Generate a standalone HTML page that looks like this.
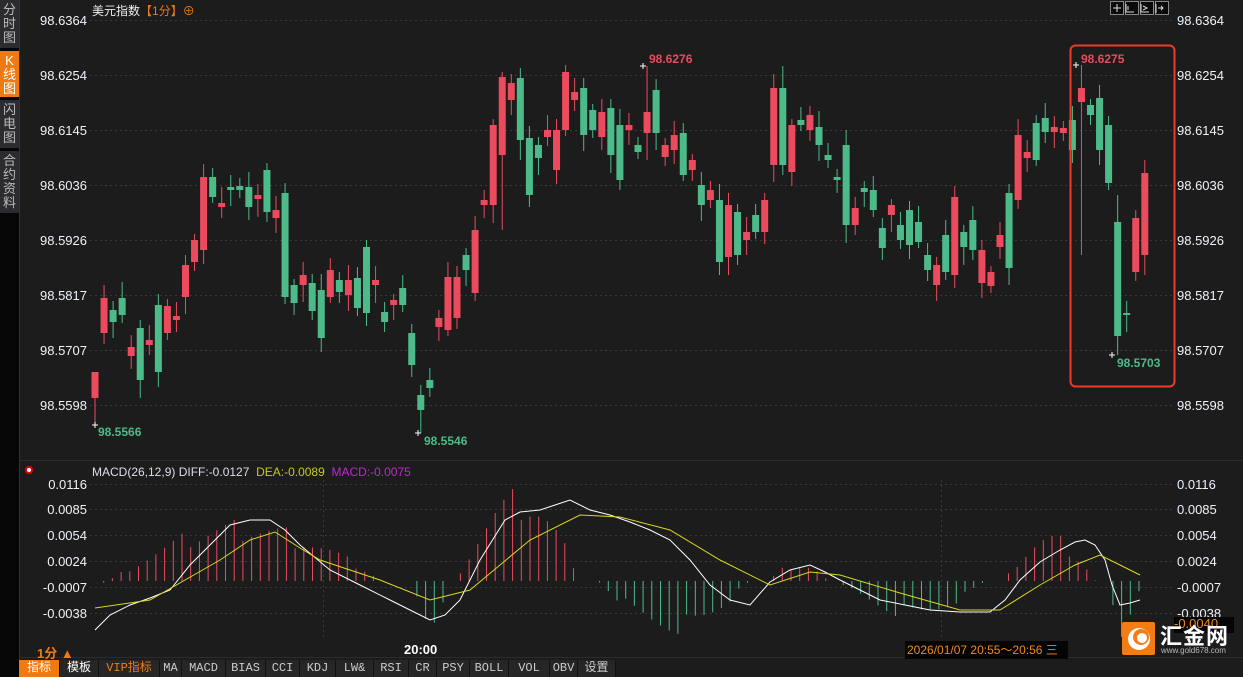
<!DOCTYPE html>
<html><head><meta charset="utf-8"><style>
*{margin:0;padding:0;box-sizing:border-box}
body{width:1243px;height:677px;background:#1c1c1c;overflow:hidden;position:relative;font-family:"Liberation Sans","Noto Sans CJK SC",sans-serif;color:#e8eef5}
.a{position:absolute;white-space:nowrap}
.tab{position:absolute;left:0;width:19px;background:#2c2c30;color:#bbb;font-size:13px;line-height:14px;text-align:center;padding-top:3px}
.bar{position:absolute;left:19px;top:660px;height:17px;display:flex;font-size:12px}
.bar div{background:#262626;border-right:1px solid #111;color:#ccc;text-align:center;line-height:17px;font-family:"Liberation Mono","Noto Sans CJK SC",monospace}
</style></head><body>
<svg class="a" style="left:0;top:0" width="1243" height="677" id="s"></svg>
<div class="tab" style="top:0;height:48px">分<br>时<br>图</div>
<div class="tab" style="top:51px;height:46px;background:#f07a12;color:#fff">K<br>线<br>图</div>
<div class="tab" style="top:100px;height:48px">闪<br>电<br>图</div>
<div class="tab" style="top:151px;height:62px">合<br>约<br>资<br>料</div>
<div class="a" style="left:92px;top:2px;font-size:12px;color:#eee">美元指数<span style="color:#f07a12">【1分】⊕</span></div>
<div class="a" style="left:92px;top:465px;font-size:12px;color:#dde">MACD(26,12,9) DIFF:-0.0127 &nbsp;<span style="color:#c8c81a">DEA:-0.0089</span> &nbsp;<span style="color:#c026d3">MACD:-0.0075</span></div>
<div class="a" style="left:37px;top:643px;font-size:13px;color:#f07a12;font-weight:bold">1分 ▲</div>
<div class="a" style="left:404px;top:642px;font-size:13px;color:#fff;font-weight:bold">20:00</div>
<div class="a" style="left:905px;top:641px;width:163px;height:18px;background:#050505;color:#f08a18;font-size:12px;line-height:18px;padding-left:2px">2026/01/07 20:55～20:56 三</div>
<div class="a" style="left:1174px;top:617px;width:60px;height:16px;background:#050505;color:#f08a18;font-size:13px;line-height:14px">-0.0040</div>
<div class="a" style="left:1122px;top:622px;width:33px;height:33px;background:#f47c15;border-radius:2px"></div>
<svg class="a" style="left:1122px;top:622px" width="33" height="33"><circle cx="17" cy="17" r="11" fill="#fff"/><circle cx="19" cy="15" r="8" fill="#f47c15"/><circle cx="20" cy="16" r="5" fill="#fff"/></svg>
<div class="a" style="left:1160px;top:619px;font-size:22px;color:#fff;font-weight:bold;letter-spacing:1px">汇金网</div>
<div class="a" style="left:1161px;top:646px;font-size:8px;color:#bbb">www.gold678.com</div>
<div class="bar">
<div style="width:41px;background:#f07a12;color:#fff">指标</div>
<div style="width:39px;color:#fff">模板</div>
<div style="width:61px;color:#f07a12">VIP指标</div>
<div style="width:22px">MA</div><div style="width:44px">MACD</div><div style="width:40px">BIAS</div><div style="width:34px">CCI</div><div style="width:36px">KDJ</div><div style="width:38px">LW&amp;</div><div style="width:35px">RSI</div><div style="width:28px">CR</div><div style="width:33px">PSY</div><div style="width:39px">BOLL</div><div style="width:41px">VOL</div><div style="width:28px">OBV</div><div style="width:38px">设置</div>
</div>
<script>
const s=document.getElementById('s');let h='';
const R='#ec4b5e',G='#4dbb89';
h+='<rect x="0" y="0" width="19" height="677" fill="#060606"/>';
h+='<line x1="19.5" y1="0" x2="19.5" y2="660" stroke="#333"/>';
h+='<line x1="19" y1="460.5" x2="1243" y2="460.5" stroke="#2c2c2c"/>';
h+='<line x1="19" y1="657.5" x2="1243" y2="657.5" stroke="#2c2c2c"/>';
const L=[["98.6364",20],["98.6254",75],["98.6145",130],["98.6036",185],["98.5926",240],["98.5817",295],["98.5707",350],["98.5598",405]];
for(const [t,y] of L){h+=`<line x1="90" y1="${y+.5}" x2="1172" y2="${y+.5}" stroke="#3a3a3a" stroke-dasharray="2,3"/>`;
h+=`<text x="87" y="${y+5}" fill="#eef3fa" font-size="13" text-anchor="end">${t}</text><text x="1177" y="${y+5}" fill="#eef3fa" font-size="13">${t}</text>`;}
const M=[["0.0116",484],["0.0085",509],["0.0054",535],["0.0024",561],["-0.0007",587],["-0.0038",613]];
for(const [t,y] of M){h+=`<line x1="90" y1="${y+.5}" x2="1172" y2="${y+.5}" stroke="#3a3a3a" stroke-dasharray="2,3"/>`;
h+=`<text x="87" y="${y+5}" fill="#eef3fa" font-size="13" text-anchor="end">${t}</text><text x="1177" y="${y+5}" fill="#eef3fa" font-size="13">${t}</text>`;}
h+='<line x1="323.5" y1="480" x2="323.5" y2="640" stroke="#3a3a3a" stroke-dasharray="2,3"/><line x1="941.5" y1="480" x2="941.5" y2="640" stroke="#3a3a3a" stroke-dasharray="2,3"/>';
const C=[[R,372,398],[R,298,333],[G,310,322],[G,298,315],[R,347,356],[G,328,380],[R,340,345],[G,305,372],[R,306,333],[R,316,320],[R,265,297],[R,240,262],[R,177,250],[G,177,197],[R,203,207],[G,187,190],[G,186,190],[G,187,207],[R,195,199],[G,170,212],[R,210,218],[G,193,297],[G,285,303],[R,275,285],[G,283,311],[G,290,338],[R,270,297],[G,280,292],[R,280,295],[G,278,308],[G,247,313],[R,280,285],[G,312,322],[R,300,305],[G,288,305],[G,333,365],[G,395,410],[G,380,388],[R,318,327],[R,277,330],[R,277,318],[G,255,270],[R,230,293],[R,200,205],[R,125,205],[R,77,155],[R,83,100],[G,78,140],[G,138,195],[G,145,158],[R,130,137],[R,130,170],[R,72,130],[R,92,100],[G,88,135],[G,110,130],[R,112,137],[G,108,155],[G,125,180],[R,125,130],[G,145,152],[R,112,133],[G,90,133],[R,145,157],[R,135,150],[G,133,175],[R,160,170],[G,185,205],[R,190,200],[G,200,262],[R,205,257],[G,212,255],[R,232,240],[G,215,232],[R,200,232],[R,88,165],[G,88,165],[R,125,172],[G,120,125],[R,115,130],[G,127,145],[G,155,160],[G,177,180],[G,145,225],[R,208,225],[G,188,192],[G,190,210],[G,228,248],[R,205,215],[G,225,240],[G,210,245],[G,222,242],[G,255,270],[R,265,285],[G,235,272],[R,197,275],[G,232,247],[G,220,250],[R,250,283],[R,272,286],[R,235,247],[G,193,268],[R,135,200],[R,152,158],[G,123,160],[G,118,132],[R,127,132],[R,128,133],[G,120,150],[R,88,102],[G,105,115],[G,98,150],[G,125,183],[G,222,336],[G,313,315],[R,218,272],[R,173,255]];
const W={0:[372,425],36:[385,433],45:[72,230],47:[68,160],109:[65,255],113:[195,355],116:[160,275],61:[66,160],76:[66,175]};
const SP=9.05;
C.forEach((c,i)=>{const x=95+i*SP;let [w1,w2]=W[i]||[c[1]-6-(i*7%11),c[2]+6+(i*5%13)];
h+=`<line x1="${x}" y1="${w1}" x2="${x}" y2="${w2}" stroke="${c[0]}"/><rect x="${x-3.5}" y="${c[1]}" width="7" height="${Math.max(2,c[2]-c[1])}" fill="${c[0]}"/>`;});
h+='<text x="98" y="436" fill="#4dbb89" font-size="12" font-weight="bold">98.5566</text><text x="424" y="445" fill="#4dbb89" font-size="12" font-weight="bold">98.5546</text>';
h+='<text x="649" y="63" fill="#ec4b5e" font-size="12" font-weight="bold">98.6276</text><text x="1081" y="63" fill="#ec4b5e" font-size="12" font-weight="bold">98.6275</text><text x="1117" y="367" fill="#4dbb89" font-size="12" font-weight="bold">98.5703</text>';
h+='<path d="M92 425h6M95 422v6M415 433h6M418 430v6M640 66h6M643 63v6M1073 65h6M1076 62v6M1109 355h6M1112 352v6" stroke="#fff"/>';
h+='<rect x="1070.5" y="45.5" width="104" height="341" rx="5" fill="none" stroke="#f03a2a" stroke-width="2"/>';
const Z=581;
function hv(x){const seg=[[95,105,595],[108,410,518],[412,452,635],[455,595,487],[598,765,635],[768,835,560],[838,1000,620],[1004,1105,530],[1108,1145,640]];
for(const [a,b,p] of seg){if(x>=a&&x<=b){const t=(x-a)/(b-a);return Z+(p-Z)*Math.sin(Math.PI*Math.min(1,t*1.1))*(0.6+0.4*((x*13)%7)/7);}}return Z;}
for(let x=95;x<=1140;x+=8.7){const v=hv(x);h+=`<line x1="${x}" y1="${Z}" x2="${x}" y2="${v}" stroke="${v<Z?R:G}"/>`;}
const D=[[95,630],[110,615],[130,605],[150,598],[170,590],[190,565],[210,545],[230,525],[250,520],[270,520],[285,530],[300,545],[330,570],[360,585],[390,600],[410,610],[430,620],[445,615],[460,600],[480,560],[505,520],[520,512],[540,510],[555,505],[570,500],[590,510],[610,515],[630,522],[650,530],[670,540],[690,560],[710,585],[730,600],[750,605],[770,582],[790,570],[810,565],[825,572],[840,580],[860,590],[880,600],[905,605],[930,610],[960,612],[990,612],[1005,600],[1020,580],[1040,562],[1060,550],[1075,542],[1085,540],[1095,545],[1105,560],[1112,585],[1120,605],[1130,603],[1140,600]];
const E=[[95,608],[150,600],[220,560],[250,540],[275,532],[300,548],[320,560],[380,580],[430,600],[470,590],[500,565],[530,540],[580,515],[620,517],[670,530],[720,560],[770,585],[810,572],[840,575],[900,593],[960,610],[1000,610],[1040,585],[1075,565],[1100,555],[1120,565],[1140,575]];
h+=`<polyline points="${D.join(' ')}" fill="none" stroke="#fff" stroke-width="1"/><polyline points="${E.join(' ')}" fill="none" stroke="#d8d820" stroke-width="1"/>`;
h+='<circle cx="29" cy="470" r="3" fill="#fff" stroke="#e00" stroke-width="2"/>';
for(let k=0;k<4;k++){const x=1110+k*15;h+=`<rect x="${x+.5}" y="1.5" width="13" height="13" fill="#0a0a0a" stroke="#888"/>`;}
h+='<path d="M1117 4v8M1113 8h8M1126 4v8h8M1128 6v4M1141 4v8h8M1143 6l4 2-4 2M1156 4v9M1158 8h5M1161 6l2 2-2 2" stroke="#ddd" fill="none"/>';
s.innerHTML=h;
</script>
</body></html>
